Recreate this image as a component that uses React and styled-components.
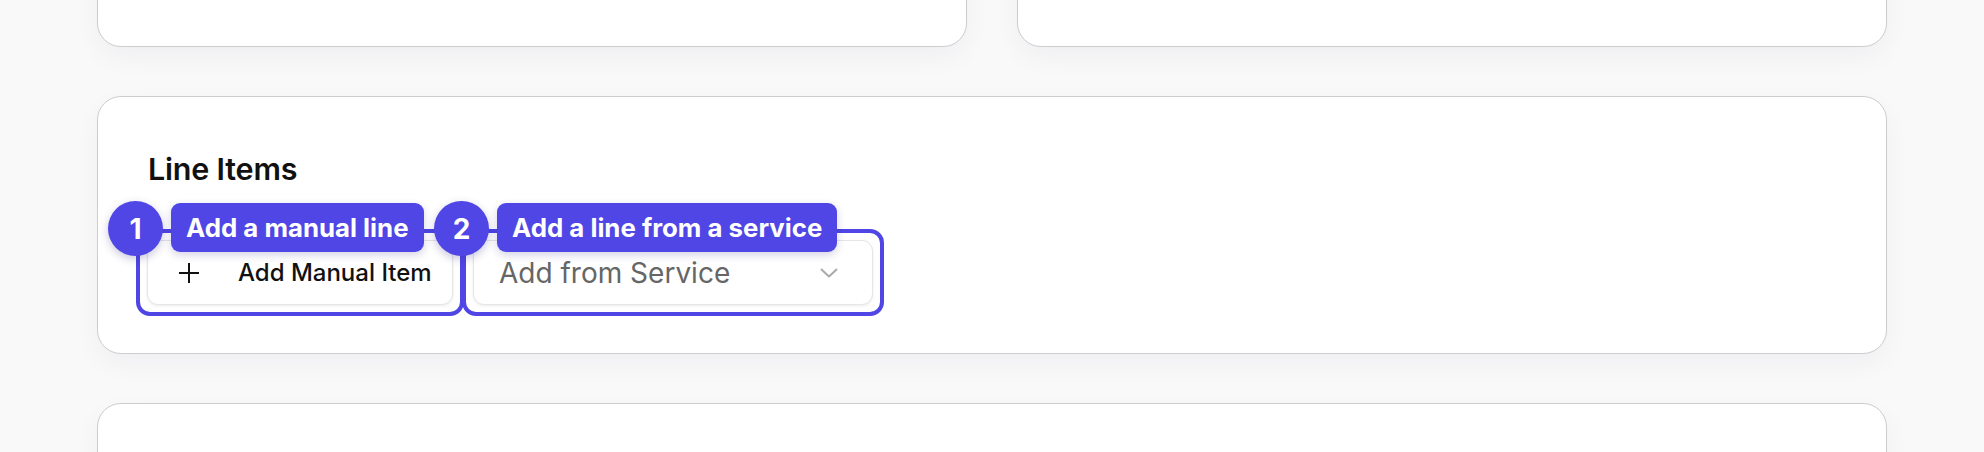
import React from 'react';
import styled, { createGlobalStyle } from 'styled-components';

const GlobalStyle = createGlobalStyle`
  html, body {
    margin: 0;
    padding: 0;
    background: #f9f9fa;
    font-family: Inter, "Noto Sans", sans-serif;
    overflow: hidden;
  }
`;

const INDIGO = '#4f46e5';

const Page = styled.div`
  width: 1790px;
  margin: -150px 0 0 97px;
  display: flex;
  flex-direction: column;
  gap: 49px;
`;

const TopRow = styled.div`
  display: grid;
  grid-template-columns: 1fr 1fr;
  gap: 50px;
`;

const Card = styled.div`
  box-sizing: border-box;
  background: #fff;
  border: 1.5px solid #cdcdcf;
  border-radius: 24px;
  box-shadow: 0 10px 28px rgba(20, 20, 40, 0.045);
  height: ${(p) => p.$height || 'auto'};
  padding: ${(p) => p.$pad || '0 50px'};
`;

const Field = styled.div`
  height: 120px;
  margin-top: 25px;
  border-radius: 10px;
  background: #fff;
  box-shadow: 0 1px 3px rgba(0, 0, 0, 0.09);
`;

const Title = styled.h2`
  margin: 0;
  font-size: 30.5px;
  line-height: 36px;
  font-weight: 600;
  color: #111;
  letter-spacing: -0.2px;
`;

const ButtonRow = styled.div`
  display: flex;
  align-items: flex-start;
  margin: 42px 0 0 -12px;
`;

const Highlight = styled.div`
  position: relative;
  padding: 7px;
  border: 4px solid ${INDIGO};
  border-radius: 14px;
  margin-left: ${(p) => p.$overlap || '0'};
`;

const Badge = styled.div`
  position: absolute;
  left: -32px;
  top: -32px;
  width: 55px;
  height: 55px;
  border-radius: 50%;
  background: ${INDIGO};
  color: #fff;
  font-size: 28px;
  font-weight: 700;
  display: flex;
  align-items: center;
  justify-content: center;
  box-shadow: 0 3px 8px rgba(40, 30, 120, 0.25);
  z-index: 2;
`;

const Label = styled.div`
  position: absolute;
  left: 31px;
  top: -30px;
  height: 49px;
  padding: 0 15px;
  border-radius: 9px;
  background: ${INDIGO};
  color: #fff;
  font-size: 25.8px;
  font-weight: 700;
  line-height: 49px;
  white-space: nowrap;
  box-shadow: 0 3px 8px rgba(40, 30, 120, 0.2);
  z-index: 2;
`;

const Control = styled.div`
  box-sizing: border-box;
  width: ${(p) => p.$width};
  height: 65px;
  display: flex;
  align-items: center;
  background: #fff;
  border: 1.5px solid #e6e6e8;
  border-radius: 11px;
  box-shadow: 0 1px 3px rgba(0, 0, 0, 0.08);
`;

const ManualButton = styled(Control)`
  padding: 0 0 0 30px;
  gap: 38px;
  font-size: 24px;
  font-weight: 500;
  color: #111;
`;

const Select = styled(Control)`
  padding: 0 34px 0 25px;
  justify-content: space-between;
  font-size: 28px;
  color: #666;
`;

const PlusIcon = () => (
  <svg width="22" height="22" viewBox="0 0 22 22" fill="none" stroke="#111" strokeWidth="2">
    <path d="M11 1v20M1 11h20" />
  </svg>
);

const Chevron = () => (
  <svg width="18" height="10" viewBox="0 0 18 10" fill="none" stroke="#aaa" strokeWidth="2" strokeLinecap="round" strokeLinejoin="round">
    <path d="M1.5 1.5L9 8.5l7.5-7" />
  </svg>
);

const App = () => {
  return (
    <>
      <GlobalStyle />
      <Page>
        <TopRow>
          <Card $height="197px">
            <Field />
          </Card>
          <Card $height="197px" />
        </TopRow>
        <Card $pad="54px 50px 37px">
          <Title>Line Items</Title>
          <ButtonRow>
            <Highlight>
              <Badge>1</Badge>
              <Label>Add a manual line</Label>
              <ManualButton $width="306px">
                <PlusIcon />
                <span>Add Manual Item</span>
              </ManualButton>
            </Highlight>
            <Highlight $overlap="-2px">
              <Badge>2</Badge>
              <Label>Add a line from a service</Label>
              <Select $width="400px">
                <span>Add from Service</span>
                <Chevron />
              </Select>
            </Highlight>
          </ButtonRow>
        </Card>
        <Card $height="200px" />
      </Page>
    </>
  );
};

export default App;
